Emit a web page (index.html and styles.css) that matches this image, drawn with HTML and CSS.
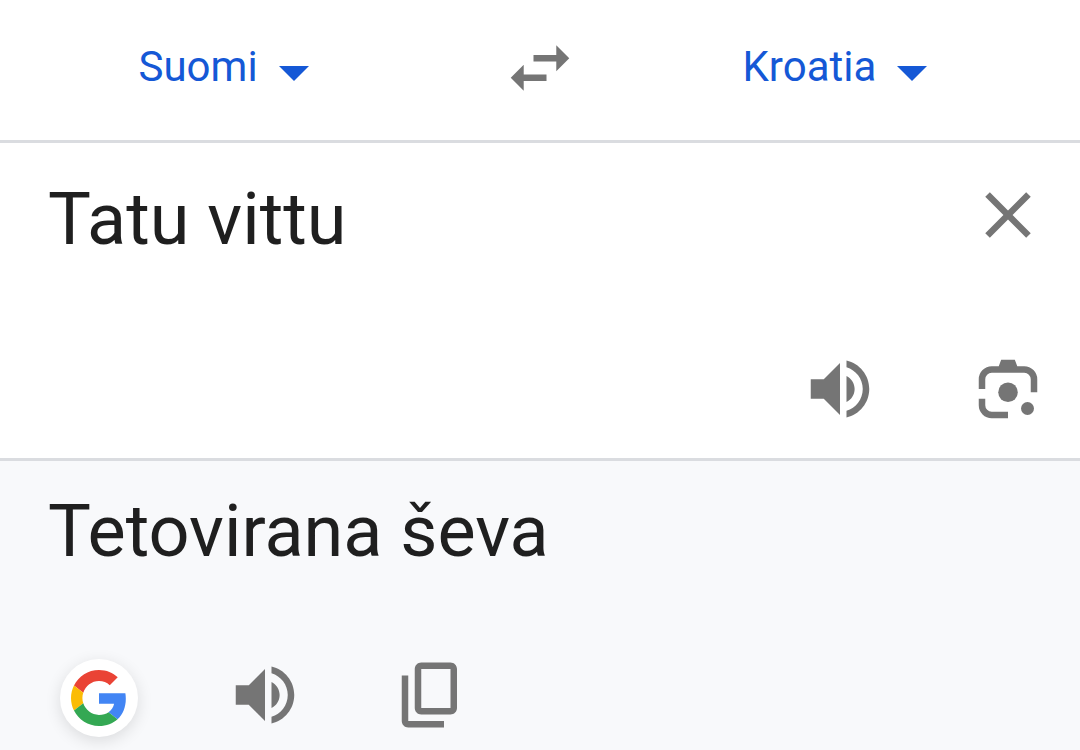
FILE: index.html
```
<!DOCTYPE html>
<html lang="fi">
<head>
    <meta charset="UTF-8">
    <meta name="viewport" content="width=device-width, initial-scale=1.0">
    <title>Kääntäjä</title>
    <link rel="stylesheet" href="styles.css">
</head>
<body>
    <!-- Kielten valinta -->
    <header class="languages">
        <div class="language language-from">
            <div class="dropdown">
                <select aria-label="Lähdekieli">
                    <option>Suomi</option>
                </select>
            </div>
        </div>
        <button class="icon-btn" type="button" aria-label="Vaihda kielet">
            <svg class="icon" viewBox="0 0 24 24"><path d="M6.99 11L3 15l3.99 4v-3H14v-2H6.99v-3zM21 9l-3.99-4v3H10v2h7.01v3L21 9z"/></svg>
        </button>
        <div class="language language-to">
            <div class="dropdown">
                <select aria-label="Kohdekieli">
                    <option>Kroatia</option>
                </select>
            </div>
        </div>
    </header>

    <!-- Lähdeteksti -->
    <section class="source">
        <div class="source-row">
            <textarea class="text" rows="1" aria-label="Lähdeteksti" spellcheck="false">Tatu vittu</textarea>
            <button class="icon-btn" type="button" aria-label="Tyhjennä">
                <svg class="icon" viewBox="0 0 24 24"><path d="M19 6.41L17.59 5 12 10.59 6.41 5 5 6.41 10.59 12 5 17.59 6.41 19 12 13.41 17.59 19 19 17.59 13.41 12z"/></svg>
            </button>
        </div>
        <div class="source-tools">
            <button class="icon-btn" type="button" aria-label="Kuuntele lähdeteksti">
                <svg class="icon" viewBox="0 0 24 24"><path d="M3 9v6h4l5 5V4L7 9H3zm13.5 3c0-1.77-1.02-3.29-2.5-4.03v8.05c1.48-.73 2.5-2.25 2.5-4.02zM14 3.23v2.06c2.89.86 5 3.54 5 6.71s-2.11 5.85-5 6.71v2.06c4.01-.91 7-4.49 7-8.77s-2.99-7.86-7-8.77z"/></svg>
            </button>
            <button class="icon-btn" type="button" aria-label="Hae kuvalla">
                <svg class="icon" viewBox="0 0 24 24">
                    <path d="M3 12V9a4 4 0 0 1 4-4h2.15L9.9 3h4.2l.75 2H17a4 4 0 0 1 4 4v4h-2V9a2 2 0 0 0-2-2H7a2 2 0 0 0-2 2v3H3z"/>
                    <path d="M3 15h2v2a2 2 0 0 0 2 2h5v2H7a4 4 0 0 1-4-4v-2z"/>
                    <circle cx="12" cy="13" r="3"/>
                    <circle cx="18" cy="18" r="2"/>
                </svg>
            </button>
        </div>
    </section>

    <!-- Käännös -->
    <section class="result">
        <p class="text" lang="hr">Tetovirana ševa</p>
        <div class="result-tools">
            <button class="google-btn" type="button" aria-label="Google-haku">
                <svg viewBox="0 0 48 48">
                    <path fill="#ea4335" d="M24 9.5c3.54 0 6.71 1.22 9.21 3.6l6.85-6.85C35.9 2.38 30.47 0 24 0 14.62 0 6.51 5.38 2.56 13.22l7.98 6.19C12.43 13.72 17.74 9.5 24 9.5z"/>
                    <path fill="#4285f4" d="M46.98 24.55c0-1.57-.15-3.09-.38-4.55H24v9.02h12.94c-.58 2.96-2.26 5.48-4.78 7.18l7.73 6c4.51-4.18 7.09-10.36 7.09-17.65z"/>
                    <path fill="#fbbc05" d="M10.53 28.59c-.48-1.45-.76-2.99-.76-4.59s.27-3.14.76-4.59l-7.98-6.19C.92 16.46 0 20.12 0 24c0 3.88.92 7.54 2.56 10.78l7.97-6.19z"/>
                    <path fill="#34a853" d="M24 48c6.48 0 11.93-2.13 15.89-5.81l-7.73-6c-2.15 1.45-4.92 2.3-8.16 2.3-6.26 0-11.57-4.22-13.47-9.91l-7.98 6.19C6.51 42.62 14.62 48 24 48z"/>
                </svg>
            </button>
            <button class="icon-btn" type="button" aria-label="Kuuntele käännös">
                <svg class="icon" viewBox="0 0 24 24"><path d="M3 9v6h4l5 5V4L7 9H3zm13.5 3c0-1.77-1.02-3.29-2.5-4.03v8.05c1.48-.73 2.5-2.25 2.5-4.02zM14 3.23v2.06c2.89.86 5 3.54 5 6.71s-2.11 5.85-5 6.71v2.06c4.01-.91 7-4.49 7-8.77s-2.99-7.86-7-8.77z"/></svg>
            </button>
            <button class="icon-btn" type="button" aria-label="Kopioi käännös">
                <svg class="icon" viewBox="0 0 24 24"><path d="M18 2H9c-1.1 0-2 .9-2 2v12c0 1.1.9 2 2 2h9c1.1 0 2-.9 2-2V4c0-1.1-.9-2-2-2zm0 14H9V4h9v12zM3 6v14c0 1.1.9 2 2 2h11v-2H5V6H3z"/></svg>
            </button>
        </div>
    </section>
</body>
</html>
```
FILE: styles.css
```
* {
    box-sizing: border-box;
}
body {
    margin: 0;
    min-height: 100vh;
    display: flex;
    flex-direction: column;
    background: #fff;
    color: #1f1f1f;
    font-family: Roboto, sans-serif;
}
button {
    padding: 0;
    border: none;
    background: none;
    cursor: pointer;
}
svg {
    display: block;
}

/* Kielipalkki */
.languages {
    display: grid;
    grid-template-columns: 1fr 78px 1fr;
    align-items: center;
    padding: 29px 0 33px;
    border-bottom: 3px solid #dadce0;
}
.language {
    display: flex;
    justify-content: center;
}
.language-from {
    padding-right: 54px;
}
.language-to {
    padding-left: 10px;
}
.dropdown {
    position: relative;
}
.dropdown select {
    appearance: none;
    margin: 0;
    padding: 0 50px 2px 0;
    border: none;
    background: none;
    color: #1558d6;
    font-family: inherit;
    font-size: 42px;
    line-height: 50px;
}
/* nuoli valikon päällä */
.dropdown::after {
    content: "";
    position: absolute;
    right: 0;
    top: 24px;
    border: 15px solid transparent;
    border-top-color: #1558d6;
    border-bottom: none;
    pointer-events: none;
}

.icon-btn {
    flex: none;
    width: 78px;
    height: 78px;
}
.icon {
    width: 78px;
    height: 78px;
    fill: #757575;
}
.text {
    margin: 0;
    padding: 0;
    color: #1f1f1f;
    font-family: inherit;
    font-size: 72px;
    line-height: 84px;
}

.source {
    padding: 33px 33px 30px 48px;
    border-bottom: 3px solid #dadce0;
}
.source-row {
    display: flex;
    align-items: flex-start;
}
.source-row .text {
    flex: 1;
    min-width: 0;
    height: 86px;
    padding-top: 2px;
    border: none;
    background: none;
    resize: none;
    overflow: hidden;
}
.source-tools {
    display: flex;
    justify-content: flex-end;
    gap: 90px;
    margin-top: 88px;
}

.result {
    flex: 1;
    padding: 29px 48px 12px;
    background: #f8f9fb;
}
.result-tools {
    display: flex;
    align-items: center;
    gap: 88px;
    margin-top: 79px;
    padding-left: 12px;
}
.google-btn {
    flex: none;
    display: flex;
    align-items: center;
    justify-content: center;
    width: 78px;
    height: 78px;
    margin-top: 6px;
    border-radius: 50%;
    background: #fff;
    box-shadow: 0 4px 16px rgba(0, 0, 0, 0.12);
}
.google-btn svg {
    width: 56px;
    height: 56px;
}
```
